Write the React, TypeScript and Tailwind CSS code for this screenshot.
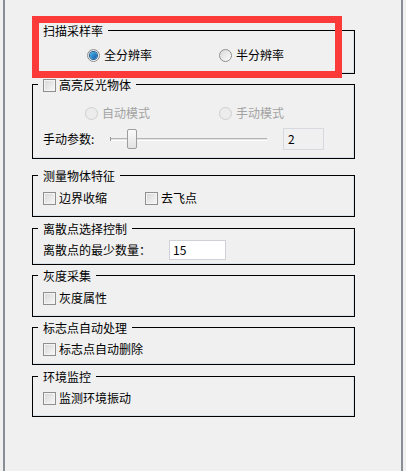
import React from "react";

const font = { fontFamily: '"Noto Sans CJK SC", "Noto Sans", sans-serif' };

const Check: React.FC = () => (
  <span className="inline-block w-[13px] h-[13px] shrink-0 border border-[#8f8f8f] bg-gradient-to-br from-[#d6d6d6] to-[#f9f9f9] shadow-[inset_0_0_0_1px_#f4f4f4]" />
);

const Radio: React.FC<{ checked?: boolean; disabled?: boolean }> = ({ checked, disabled }) => (
  <span
    className={`relative inline-flex w-[13px] h-[13px] shrink-0 items-center justify-center rounded-full border ${
      disabled ? "border-[#cfcfcf] bg-[#ececec]" : "border-[#8e8f8f] bg-gradient-to-br from-[#dadada] to-[#fbfbfb]"
    }`}
  >
    {checked && (
      <span className="w-[7px] h-[7px] rounded-full bg-gradient-to-br from-[#4fb6ea] to-[#0a5aa8] shadow-[0_0_0_1px_#1c5f96]" />
    )}
  </span>
);

const Group: React.FC<{ title: React.ReactNode; className: string; children: React.ReactNode }> = ({
  title,
  className,
  children,
}) => (
  <div
    className={`relative ml-[27px] w-[323px] border border-black shadow-[inset_-1px_-1px_0_#d9e2ea] ${className}`}
  >
    <div className="absolute left-[5px] top-[-7px] h-[14px] flex items-center gap-[3px] px-[5px] bg-[#f0f0f0] text-[12px] leading-[14px] text-black">
      {title}
    </div>
    {children}
  </div>
);

const CheckRow: React.FC<{ label: string }> = ({ label }) => (
  <div className="flex items-center gap-[3px] h-[16px]">
    <Check />
    <span>{label}</span>
  </div>
);

export default function App() {
  return (
    <div className="relative w-[406px] h-[471px] bg-[#f0f0f0] overflow-hidden text-[12px] text-black" style={font}>
      <div className="ml-[3px] w-[400px] h-full border-x-2 border-[#8a8d95] pt-[30px]">
        {/* 扫描采样率 */}
        <Group title="扫描采样率" className="mt-[0px] h-[44px]">
          <div className="flex items-center h-[16px] mt-[16px] pl-[54px]">
            <div className="flex items-center gap-[4px] w-[132px]">
              <Radio checked />
              <span>全分辨率</span>
            </div>
            <div className="flex items-center gap-[4px]">
              <Radio />
              <span>半分辨率</span>
            </div>
          </div>
        </Group>

        {/* 高亮反光物体 */}
        <Group
          title={
            <>
              <Check />
              <span>高亮反光物体</span>
            </>
          }
          className="mt-[10px] h-[75px]"
        >
          <div className="flex items-center h-[16px] mt-[20px] pl-[52px] text-[#a3a3a3]">
            <div className="flex items-center gap-[4px] w-[134px]">
              <Radio disabled />
              <span>自动模式</span>
            </div>
            <div className="flex items-center gap-[4px]">
              <Radio disabled />
              <span>手动模式</span>
            </div>
          </div>
          <div className="flex items-center h-[22px] mt-[7px] pl-[10px]">
            <span className="w-[67px]">手动参数:</span>
            <div className="relative w-[157px] h-[20px] flex items-center">
              <div className="w-full h-[3px] border-t border-[#b4b4b4] bg-[#e4e4e4] border-b border-b-white" />
              <div className="absolute left-0 top-[8px] w-[1px] h-[4px] bg-[#9a9a9a]" />
              <div className="absolute left-[17px] top-[0px] w-[10px] h-[20px] rounded-[2px] border border-[#9d9d9d] bg-gradient-to-b from-[#fbfbfb] to-[#e3e3e3]" />
            </div>
            <div className="ml-[16px] w-[41px] h-[22px] border border-[#d6d9dd] bg-[#f0f0f0] flex items-center pl-[4px]">
              2
            </div>
          </div>
        </Group>

        {/* 测量物体特征 */}
        <Group title="测量物体特征" className="mt-[16px] h-[42px]">
          <div className="flex items-center mt-[14px] pl-[10px]">
            <div className="w-[102px]">
              <CheckRow label="边界收缩" />
            </div>
            <CheckRow label="去飞点" />
          </div>
        </Group>

        {/* 离散点选择控制 */}
        <Group title="离散点选择控制" className="mt-[11px] h-[37px]">
          <div className="flex items-center h-[20px] mt-[11px] pl-[10px]">
            <span className="w-[126px]">离散点的最少数量：</span>
            <div className="w-[57px] h-[20px] border border-[#cfd2d6] bg-white flex items-center pl-[3px]">15</div>
          </div>
        </Group>

        {/* 灰度采集 */}
        <Group title="灰度采集" className="mt-[10px] h-[42px]">
          <div className="mt-[14px] pl-[10px]">
            <CheckRow label="灰度属性" />
          </div>
        </Group>

        {/* 标志点自动处理 */}
        <Group title="标志点自动处理" className="mt-[10px] h-[38px]">
          <div className="mt-[13px] pl-[10px]">
            <CheckRow label="标志点自动删除" />
          </div>
        </Group>

        {/* 环境监控 */}
        <Group title="环境监控" className="mt-[11px] h-[41px]">
          <div className="mt-[13px] pl-[10px]">
            <CheckRow label="监测环境振动" />
          </div>
        </Group>
      </div>

      {/* red highlight annotation */}
      <div className="absolute left-[32px] top-[16px] w-[310px] h-[62px] border-[7px] border-[#fd3a3a]" />
    </div>
  );
}
